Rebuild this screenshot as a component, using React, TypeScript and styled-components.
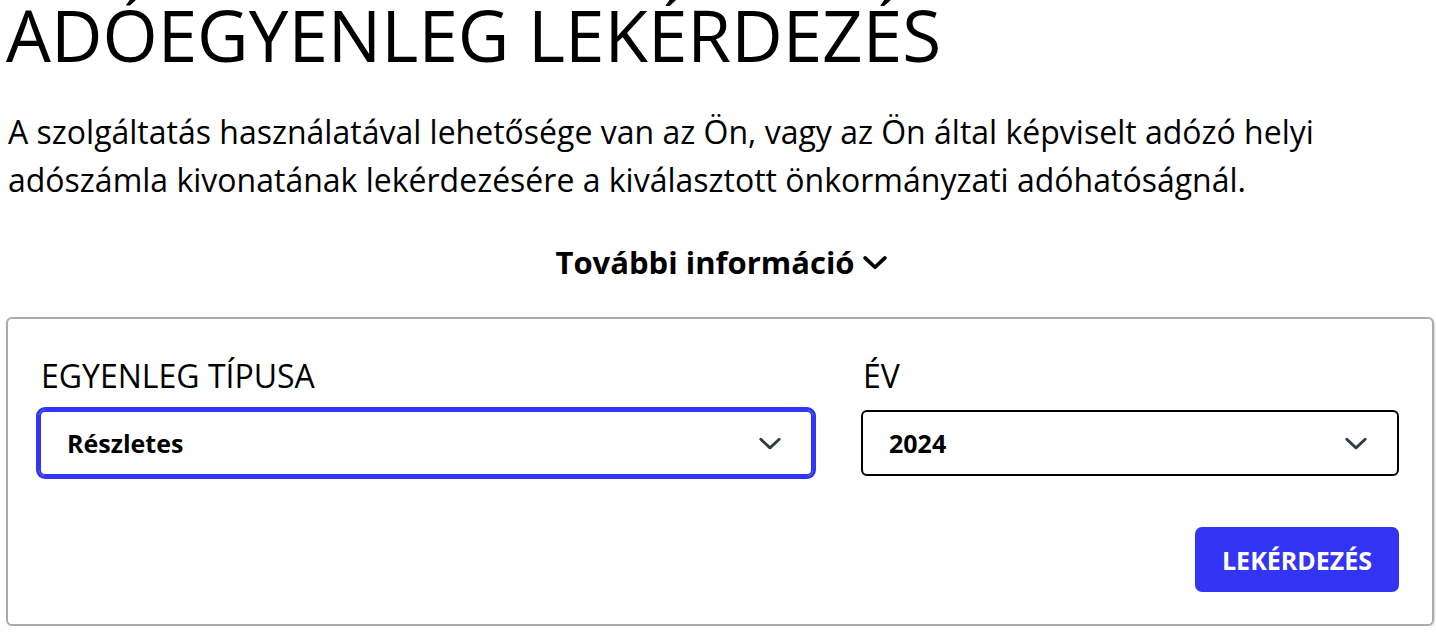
import React from 'react';
import styled, { createGlobalStyle } from 'styled-components';

const GlobalStyle = createGlobalStyle`
  html, body {
    margin: 0;
    padding: 0;
    background: #fff;
  }
  body {
    font-family: 'Open Sans', 'Noto Sans', Arial, sans-serif;
    color: #000;
  }
`;

const BRAND = '#3434f4';

interface ChevronProps {
  size?: number;
  stroke?: number;
  color?: string;
}

const Chevron = ({ size = 26, stroke = 2.6, color = '#343a40' }: ChevronProps) => (
  <svg width={size} height={size} viewBox="0 0 24 24" fill="none" aria-hidden="true">
    <path
      d="M3.5 8.5 L12 16.5 L20.5 8.5"
      stroke={color}
      strokeWidth={stroke}
      strokeLinecap="round"
      strokeLinejoin="round"
    />
  </svg>
);

const Options = [
  { id: 'type', label: 'EGYENLEG TÍPUSA', value: 'Részletes', focused: true },
  { id: 'year', label: 'ÉV', value: '2024', focused: false },
];

export default function App() {
  return (
    <Page>
      <GlobalStyle />
      <Title>ADÓEGYENLEG LEKÉRDEZÉS</Title>
      <Lead>
        A szolgáltatás használatával lehetősége van az Ön, vagy az Ön által képviselt adózó helyi
        adószámla kivonatának lekérdezésére a kiválasztott önkormányzati adóhatóságnál.
      </Lead>
      <InfoRow>
        <InfoToggle type="button">
          További információ
          <Chevron size={28} stroke={3.2} color="#000" />
        </InfoToggle>
      </InfoRow>
      <Card>
        <FieldGrid>
          {Options.map((opt) => (
            <Field key={opt.id}>
              <Label>{opt.label}</Label>
              <SelectBox $focused={opt.focused} tabIndex={0} role="combobox">
                <span>{opt.value}</span>
                <Chevron />
              </SelectBox>
            </Field>
          ))}
        </FieldGrid>
        <Actions>
          <SubmitButton type="button">LEKÉRDEZÉS</SubmitButton>
        </Actions>
      </Card>
    </Page>
  );
}

const Page = styled.div`
  padding: 0 2px 0 6px;
  width: 1436px;
  box-sizing: border-box;
`;

const Title = styled.h1`
  margin: 0 0 38px;
  font-size: 71px;
  font-weight: 400;
  line-height: 70px;
  letter-spacing: 0;
`;

const Lead = styled.p`
  margin: 0 0 34px 2px;
  font-size: 32px;
  line-height: 48px;
`;

const InfoRow = styled.div`
  display: flex;
  justify-content: center;
  margin-bottom: 31px;
`;

const InfoToggle = styled.button`
  display: inline-flex;
  align-items: center;
  gap: 6px;
  padding: 0 0 0 4px;
  border: 0;
  background: none;
  font-family: inherit;
  font-size: 31px;
  font-weight: 700;
  line-height: 48px;
  color: #000;
  cursor: pointer;
`;

const Card = styled.section`
  border: 2px solid #ababab;
  border-radius: 6px;
  box-shadow: 1px 1px 2px rgba(0, 0, 0, 0.15);
  padding: 33px 33px 32px 31px;
`;

const FieldGrid = styled.div`
  display: grid;
  grid-template-columns: 774px 1fr;
  column-gap: 48px;
`;

const Field = styled.div`
  display: flex;
  flex-direction: column;
`;

const Label = styled.label`
  font-size: 32px;
  line-height: 48px;
  margin: 0 0 10px 2px;
`;

const SelectBox = styled.div<{ $focused?: boolean }>`
  display: flex;
  align-items: center;
  justify-content: space-between;
  box-sizing: border-box;
  height: 66px;
  padding: 0 28px 0 26px;
  border: 2px solid ${(p) => (p.$focused ? BRAND : '#000')};
  border-radius: 6px;
  box-shadow: ${(p) => (p.$focused ? `0 0 0 3px ${BRAND}` : 'none')};
  font-size: 25px;
  font-weight: 700;
  outline: none;
`;

const Actions = styled.div`
  display: flex;
  justify-content: flex-end;
  margin-top: 51px;
`;

const SubmitButton = styled.button`
  height: 65px;
  padding: 0 27px;
  border: 0;
  border-radius: 7px;
  background: ${BRAND};
  color: #fff;
  font-family: inherit;
  font-size: 25px;
  font-weight: 700;
  cursor: pointer;
`;
